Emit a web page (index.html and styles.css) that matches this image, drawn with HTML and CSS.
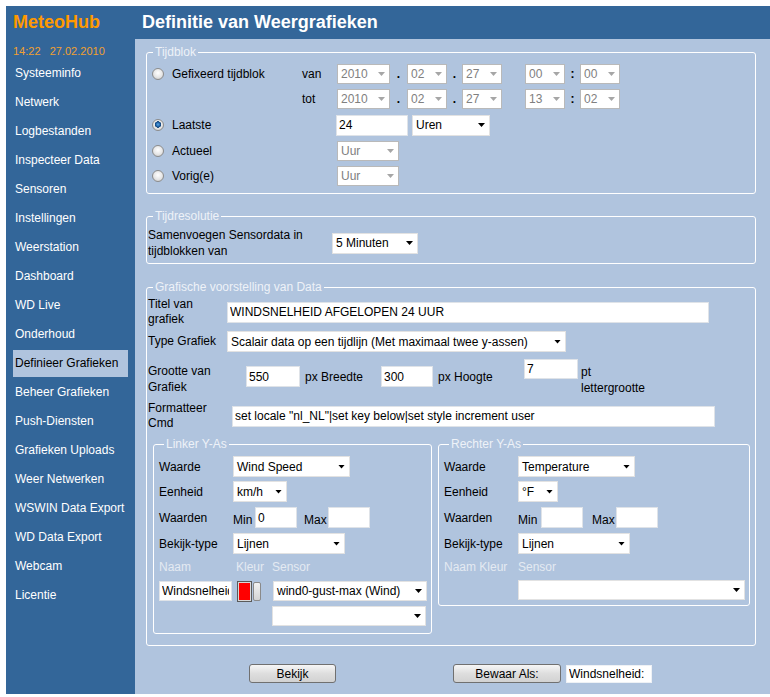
FILE: index.html
```html
<!DOCTYPE html>
<html lang="nl">
<head>
<meta charset="utf-8">
<title>MeteoHub - Definitie van Weergrafieken</title>
<link rel="stylesheet" href="styles.css">
</head>
<body>
<div class="page">
  <aside class="side">
    <div class="brand">MeteoHub</div>
    <div class="clock">14:22&nbsp;&nbsp;&nbsp;27.02.2010</div>
    <ul class="menu">
      <li>Systeeminfo</li>
      <li>Netwerk</li>
      <li>Logbestanden</li>
      <li>Inspecteer Data</li>
      <li>Sensoren</li>
      <li>Instellingen</li>
      <li>Weerstation</li>
      <li>Dashboard</li>
      <li>WD Live</li>
      <li>Onderhoud</li>
      <li class="active">Definieer Grafieken</li>
      <li>Beheer Grafieken</li>
      <li>Push-Diensten</li>
      <li>Grafieken Uploads</li>
      <li>Weer Netwerken</li>
      <li>WSWIN Data Export</li>
      <li>WD Data Export</li>
      <li>Webcam</li>
      <li>Licentie</li>
    </ul>
  </aside>
  <main class="main">
    <h1 class="title">Definitie van Weergrafieken</h1>
    <div class="content">
      <fieldset class="box box-tijd">
        <legend>Tijdblok</legend>
        <div class="trow">
          <label class="opt"><input type="radio" name="tb" class="radio">Gefixeerd tijdblok</label>
          <span class="vt">van</span>
          <div class="sel dis w-year">2010</div>
          <span class="sep s17">.</span>
          <div class="sel dis w-two">02</div>
          <span class="sep s15">.</span>
          <div class="sel dis w-two">27</div>
          <span class="sep s23"></span>
          <div class="sel dis w-two">00</div>
          <span class="sep s15">:</span>
          <div class="sel dis w-two">00</div>
        </div>
        <div class="trow">
          <span class="opt"></span>
          <span class="vt">tot</span>
          <div class="sel dis w-year">2010</div>
          <span class="sep s17">.</span>
          <div class="sel dis w-two">02</div>
          <span class="sep s15">.</span>
          <div class="sel dis w-two">27</div>
          <span class="sep s23"></span>
          <div class="sel dis w-two">13</div>
          <span class="sep s15">:</span>
          <div class="sel dis w-two">02</div>
        </div>
        <div class="trow gap6">
          <label class="opt"><input type="radio" name="tb" class="radio" checked>Laatste</label>
          <span class="vt"></span>
          <input class="txt w-last" type="text" value="24">
          <div class="sel w-uren">Uren</div>
        </div>
        <div class="trow gap6">
          <label class="opt"><input type="radio" name="tb" class="radio">Actueel</label>
          <span class="vt"></span>
          <div class="sel dis w-uur">Uur</div>
        </div>
        <div class="trow">
          <label class="opt"><input type="radio" name="tb" class="radio">Vorig(e)</label>
          <span class="vt"></span>
          <div class="sel dis w-uur">Uur</div>
        </div>
      </fieldset>

      <fieldset class="box box-res">
        <legend>Tijdresolutie</legend>
        <div class="rrow">
          <span class="rlabel">Samenvoegen Sensordata in tijdblokken van</span>
          <div class="sel h21 w-min">5 Minuten</div>
        </div>
      </fieldset>

      <fieldset class="box box-graf">
        <legend>Grafische voorstelling van Data</legend>
        <div class="frow">
          <span class="flabel w75">Titel van grafiek</span>
          <input class="txt h21 w-titel" type="text" value="WINDSNELHEID AFGELOPEN 24 UUR">
        </div>
        <div class="frow g4">
          <span class="flabel w75">Type Grafiek</span>
          <div class="sel h21 w-type">Scalair data op een tijdlijn (Met maximaal twee y-assen)</div>
        </div>
        <div class="frow">
          <span class="flabel w98 lh16 grootte">Grootte van Grafiek</span>
          <input class="txt h21 w-550" type="text" value="550">
          <span class="unit u1">px Breedte</span>
          <input class="txt h21 w-300" type="text" value="300">
          <span class="unit u2">px Hoogte</span>
          <div class="fsize">
            <div class="fline"><input class="txt w-pt" type="text" value="7"><span class="pt">pt</span></div>
            <div class="fline2">lettergrootte</div>
          </div>
        </div>
        <div class="frow">
          <span class="flabel w80">Formatteer Cmd</span>
          <input class="txt h21 w-cmd" type="text" value='set locale "nl_NL"|set key below|set style increment user'>
        </div>

        <div class="axes">
          <fieldset class="box yas yas-l">
            <legend>Linker Y-As</legend>
            <div class="yrow">
              <span class="ylabel">Waarde</span>
              <div class="sel h21 w-waarde">Wind Speed</div>
            </div>
            <div class="yrow g4">
              <span class="ylabel">Eenheid</span>
              <div class="sel h21 w-kmh">km/h</div>
            </div>
            <div class="yrow">
              <span class="ylabel">Waarden</span>
              <span class="mm mn">Min</span>
              <input class="txt h21 w-mm" type="text" value="0">
              <span class="mm mx">Max</span>
              <input class="txt h21 w-mm" type="text" value="">
            </div>
            <div class="yrow">
              <span class="ylabel">Bekijk-type</span>
              <div class="sel h21 w-lijn">Lijnen</div>
            </div>
            <div class="hrow">
              <span class="hn">Naam</span><span class="hk">Kleur</span><span>Sensor</span>
            </div>
            <div class="srow">
              <input class="txt w-naam" type="text" value="Windsnelheid">
              <span class="swatch"></span>
              <span class="swbtn"></span>
              <div class="sel w-sensor">wind0-gust-max (Wind)</div>
            </div>
            <div class="srow2">
              <div class="sel w-sensor"></div>
            </div>
          </fieldset>
          <fieldset class="box yas yas-r">
            <legend>Rechter Y-As</legend>
            <div class="yrow">
              <span class="ylabel">Waarde</span>
              <div class="sel h21 w-waarde">Temperature</div>
            </div>
            <div class="yrow g4">
              <span class="ylabel">Eenheid</span>
              <div class="sel h21 w-f">°F</div>
            </div>
            <div class="yrow">
              <span class="ylabel">Waarden</span>
              <span class="mm mn r">Min</span>
              <input class="txt h21 w-mm" type="text" value="">
              <span class="mm mx r">Max</span>
              <input class="txt h21 w-mm" type="text" value="">
            </div>
            <div class="yrow">
              <span class="ylabel">Bekijk-type</span>
              <div class="sel h21 w-lijn">Lijnen</div>
            </div>
            <div class="hrow">
              <span class="ylabel">Naam Kleur</span><span>Sensor</span>
            </div>
            <div class="srow r">
              <div class="sel w-sensor-r"></div>
            </div>
          </fieldset>
        </div>
      </fieldset>

      <div class="actions">
        <button class="btn b-bekijk" type="button">Bekijk</button>
        <button class="btn b-bewaar" type="button">Bewaar Als:</button>
        <input class="txt w-save" type="text" value="Windsnelheid:">
      </div>
    </div>
  </main>
</div>
</body>
</html>
```

FILE: styles.css
```css
* { box-sizing: border-box; }

body {
  margin: 6px 0 0 6px;
  font-family: "Liberation Sans", Arial, sans-serif;
  font-size: 12px;
  color: #000;
  background: #fff;
}

.page {
  display: grid;
  grid-template-columns: 129px 1fr;
  height: 688px;
  background: #336699;
}

/* ---------- sidebar ---------- */
.brand {
  height: 33px;
  line-height: 33px;
  padding-left: 7px;
  font-size: 18px;
  font-weight: bold;
  color: #ff9900;
}
.clock {
  margin-top: 5px;
  height: 14px;
  line-height: 14px;
  padding-left: 7px;
  font-size: 11px;
  color: #f0a030;
}
.menu {
  list-style: none;
  margin: 2px 0 0;
  padding: 0;
  display: flex;
  flex-direction: column;
  gap: 2px;
}
.menu li {
  height: 27px;
  line-height: 27px;
  margin-left: 7px;
  width: 115px;
  padding-left: 2px;
  color: #fff;
  white-space: nowrap;
}
.menu li.active {
  background: #b0c4de;
  color: #000;
}

/* ---------- main ---------- */
.main {
  display: flex;
  flex-direction: column;
  min-width: 0;
}
.title {
  margin: 0;
  height: 33px;
  line-height: 33px;
  padding-left: 7px;
  font-size: 18px;
  font-weight: bold;
  color: #fff;
}
.content {
  flex: 1;
  background: #b0c4de;
  padding: 6px 14px 12px 11px;
}

/* ---------- fieldsets ---------- */
.box {
  margin: 0;
  padding: 0 1px;
  border: 1px solid #fff;
  border-radius: 3px;
  min-width: 0;
}
.box legend {
  padding: 0 2px;
  margin-left: 5px;
  line-height: 14px;
  font-size: 12px;
  color: #eef2f8;
}

/* form controls */
.sel {
  position: relative;
  display: flex;
  align-items: center;
  flex: none;
  height: 20px;
  padding-left: 3px;
  background: #fff;
  border: 1px solid #e2e2e2;
  white-space: nowrap;
  overflow: hidden;
}
.sel::after {
  content: "";
  position: absolute;
  right: 4px;
  top: 50%;
  margin-top: -2px;
  width: 7px;
  height: 4px;
  background: #000;
  clip-path: polygon(0 0, 100% 0, 50% 100%);
}
.sel.dis {
  color: #808080;
  border-color: #b9b9b9;
}
.sel.dis::after { background: #a6a6a6; }

.txt {
  flex: none;
  height: 20px;
  margin: 0;
  padding: 0 2px;
  border: 1px solid #dfe3e8;
  background: #fff;
  font-family: "Liberation Sans", Arial, sans-serif;
  font-size: 12px;
  color: #000;
}
.h21 { height: 21px; }

.radio {
  appearance: none;
  -webkit-appearance: none;
  flex: none;
  width: 12px;
  height: 12px;
  margin: 0 8px 0 4px;
  border: 1px solid #8c8c8c;
  border-radius: 50%;
  background: radial-gradient(circle at 50% 40%, #ffffff 0, #e6e6e6 55%, #c2c2c2 100%);
}
.radio:checked {
  background:
    radial-gradient(circle at 50% 45%, #5fa6e0 0, #2a72b8 1.6px, #0f3f75 3px, rgba(0,0,0,0) 3.4px),
    radial-gradient(circle at 50% 40%, #ffffff 0, #e6e6e6 55%, #c2c2c2 100%);
}

/* ---------- Tijdblok ---------- */
.box-tijd { margin-top: 0; padding: 5px 1px 7px; }
.trow {
  display: flex;
  align-items: center;
  height: 20px;
}
.trow + .trow { margin-top: 5px; }
.trow.gap6 { margin-top: 6px; }
.opt {
  display: flex;
  align-items: center;
  width: 154px;
  flex: none;
}
.vt { width: 35px; flex: none; }
.sep { flex: none; text-align: center; font-weight: bold; }
.s17 { width: 17px; }
.s15 { width: 15px; }
.s23 { width: 23px; }
.w-year { width: 53px; }
.w-two { width: 40px; }
.w-last { width: 72px; margin-left: -1px; height: 21px; }
.w-uren { width: 78px; height: 21px; margin-left: 4px; }
.w-uur { width: 62px; }

/* ---------- Tijdresolutie ---------- */
.box-res { margin-top: 15px; padding: 4px 1px 4px; }
.rrow { display: flex; align-items: center; }
.rlabel { width: 180px; line-height: 16px; flex: none; }
.w-min { width: 86px; margin-left: 4px; }

/* ---------- Grafische voorstelling ---------- */
.box-graf { margin-top: 16px; padding: 3px 1px 11px; }
.frow { display: flex; align-items: center; }
.frow + .frow { margin-top: 5px; }
.frow.g4 { margin-top: 4px; }
.flabel { line-height: 15px; flex: none; }
.lh16 { line-height: 16px; }
.grootte { align-self: flex-start; margin-top: 6px; }
.w75 { width: 75px; }
.w80 { width: 80px; }
.w98 { width: 98px; }
.w-titel { width: 482px; margin-left: 4px; }
.w-type { width: 339px; height: 21px; margin-left: 4px; }
.w-550 { width: 54px; }
.w-300 { width: 52px; }
.unit { flex: none; margin-left: 5px; }
.u1 { width: 76px; }
.u2 { width: 86px; }
.fsize { display: flex; flex-direction: column; }
.fline { display: flex; align-items: flex-start; height: 24px; padding-top: 2px; }
.w-pt { width: 54px; }
.pt { margin: 6px 0 0 3px; line-height: 14px; }
.fline2 { line-height: 15px; margin-left: 57px; }
.w-cmd { width: 483px; margin-left: 4px; }

/* axes */
.axes {
  display: flex;
  align-items: flex-start;
  margin: 6px 0 0 5px;
}
.yas { padding: 5px 5px 7px; }
.yas-l { width: 279px; }
.yas-r { width: 312px; margin-left: 6px; padding-bottom: 5px; }
.yrow { display: flex; align-items: center; height: 21px; }
.yrow + .yrow { margin-top: 5px; }
.yrow.g4 { margin-top: 4px; }
.ylabel { width: 74px; flex: none; }
.mm { flex: none; padding-top: 4px; }
.mn { width: 22px; }
.mn.r { width: 23px; }
.mx { width: 24px; margin-left: 7px; }
.mx.r { margin-left: 9px; }
.w-mm { width: 42px; }
.w-waarde { width: 117px; }
.w-kmh { width: 54px; }
.w-f { width: 40px; }
.w-lijn { width: 112px; }
.hrow {
  display: flex;
  height: 16px;
  line-height: 16px;
  margin-top: 5px;
  color: #e4eaf2;
}
.hn { width: 77px; }
.hk { width: 36px; }
.srow { display: flex; align-items: center; margin-top: 6px; height: 20px; }
.srow.r { margin-top: 5px; padding-left: 74px; }
.w-naam { width: 73px; }
.swatch {
  flex: none;
  width: 15px;
  height: 21px;
  margin-left: 5px;
  border: 1px solid #5a5a5a;
  background: #ff0000;
  box-shadow: inset 0 0 0 1px #d8d8d8;
}
.swbtn {
  flex: none;
  width: 8px;
  height: 19px;
  margin-left: 1px;
  border: 1px solid #8a8a8a;
  border-radius: 2px;
  background: linear-gradient(#f2f2f2, #d4d4d4);
}
.w-sensor { width: 154px; margin-left: 12px; }
.srow2 { display: flex; margin-top: 5px; padding-left: 113px; }
.srow2 .w-sensor { margin-left: 0; }
.w-sensor-r { width: 227px; }

/* ---------- actions ---------- */
.actions {
  display: flex;
  align-items: flex-start;
  margin-top: 18px;
  height: 19px;
}
.btn {
  flex: none;
  height: 19px;
  padding: 0;
  border: 1px solid #707070;
  border-radius: 3px;
  background: linear-gradient(#f6f6f6, #dedede 50%, #d2d2d2);
  font-family: "Liberation Sans", Arial, sans-serif;
  font-size: 12px;
  color: #000;
}
.b-bekijk { width: 87px; margin-left: 103px; }
.b-bewaar { width: 108px; margin-left: 117px; }
.w-save { width: 86px; height: 18px; margin-left: 5px; margin-top: 1px; border-color: #eef1f5; }
```
